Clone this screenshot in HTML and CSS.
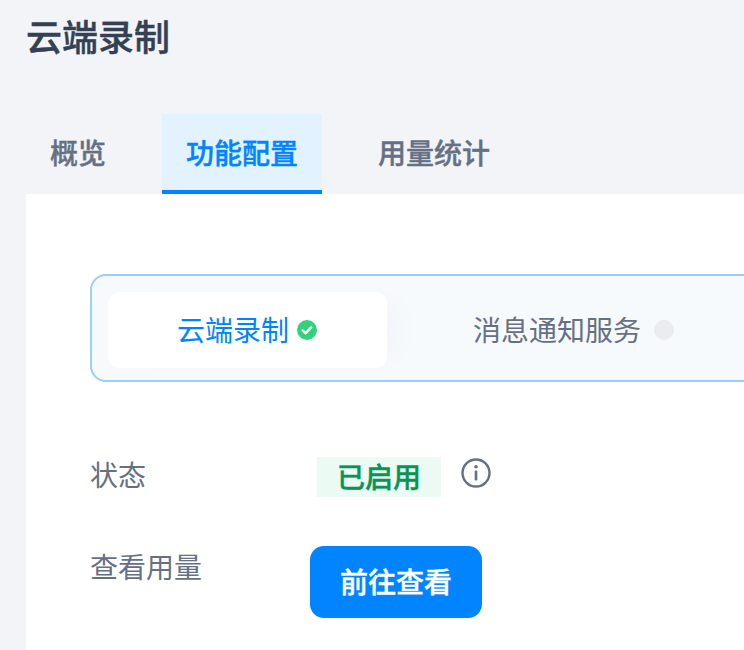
FILE: index.html
```html
<!DOCTYPE html>
<html lang="zh-CN">
<head>
<meta charset="utf-8">
<title>云端录制</title>
<link rel="stylesheet" href="styles.css">
</head>
<body>
<div class="page">
  <h1 class="title">云端录制</h1>
  <nav class="tabs">
    <a class="tab">概览</a>
    <a class="tab tab-active">功能配置</a>
    <a class="tab">用量统计</a>
  </nav>
  <main class="panel">
    <div class="segment">
      <div class="seg-item seg-active">
        <span class="seg-text">云端录制</span>
        <svg class="seg-icon" viewBox="0 0 20 20" aria-hidden="true"><circle cx="10" cy="10" r="10" fill="#32d17c"/><path d="M5.6 10.3l3 2.9 5.6-5.8" fill="none" stroke="#fff" stroke-width="2.4" stroke-linecap="round" stroke-linejoin="round"/></svg>
      </div>
      <div class="seg-item seg-next">
        <span class="seg-text">消息通知服务</span>
        <span class="seg-dot"></span>
      </div>
    </div>
    <div class="row row-status">
      <span class="label label-status">状态</span>
      <span class="badge">已启用</span>
      <svg class="info" viewBox="0 0 30 30" aria-hidden="true"><circle cx="15" cy="15" r="13.5" fill="none" stroke="#667085" stroke-width="2.4"/><circle cx="15" cy="8.8" r="1.8" fill="#667085"/><rect x="13.7" y="12.6" width="2.6" height="10" rx="1" fill="#667085"/></svg>
    </div>
    <div class="row row-usage">
      <span class="label">查看用量</span>
      <button class="btn">前往查看</button>
    </div>
  </main>
</div>
</body>
</html>
```

FILE: styles.css
```css
* { box-sizing: border-box; }
html, body { margin: 0; height: 100%; overflow: hidden; }
body {
  background: #f2f4f8;
  font-family: "Noto Sans CJK SC", "Noto Sans", sans-serif;
  font-size: 28px;
  color: #667085;
}
.page { width: 744px; height: 650px; overflow: hidden; padding-left: 26px; }
.title {
  margin: 0;
  height: 114px;
  padding-top: 10px;
  font-size: 36px;
  line-height: 50px;
  font-weight: 500;
  -webkit-text-stroke: 0.4px #344054;
  color: #344054;
}
.tabs { display: flex; gap: 32px; height: 80px; }
.tab {
  display: flex;
  align-items: center;
  padding: 0 24px;
  font-weight: 500;
  -webkit-text-stroke: 0.4px currentColor;
  color: #667085;
  border-bottom: 4px solid transparent;
}
.tab-active {
  background: #e3f2ff;
  color: #0084ff;
  border-bottom-color: #0084ff;
}
.panel {
  background: #fff;
  width: 1000px;
  height: 456px;
  padding: 80px 64px 0;
}
.segment {
  display: flex;
  height: 108px;
  padding: 16px;
  gap: 17px;
  border: 2px solid #99ceff;
  border-radius: 16px;
  background: #f6fafd;
}
.seg-item {
  display: flex;
  align-items: center;
  height: 76px;
  border-radius: 12px;
}
.seg-text { position: relative; top: -1px; line-height: 40px; }
.seg-active {
  width: 279px;
  padding-left: 69px;
  gap: 8px;
  background: #fff;
  color: #0084ff;
  box-shadow: 20px 0 30px -10px rgba(16, 40, 90, 0.025);
}
.seg-next { width: 342px; padding-left: 69px; gap: 13px; }
.seg-icon { width: 20px; height: 20px; flex: none; }
.seg-dot {
  width: 20px;
  height: 20px;
  flex: none;
  border-radius: 50%;
  background: #eaecf0;
}
.row { display: flex; align-items: flex-start; }
.label { width: 220px; line-height: 40px; }
.label-status { margin-top: -3px; height: 40px; }
.row-status { margin-top: 75px; }
.row-usage { margin-top: 49px; }
.badge {
  margin-left: 7px;
  padding: 0 20px;
  height: 40px;
  line-height: 38px;
  background: #ebfbf3;
  color: #079455;
  font-weight: 500;
  -webkit-text-stroke: 0.4px currentColor;
}
.info { width: 30px; height: 30px; margin: 1px 0 0 20px; flex: none; }
.btn {
  width: 172px;
  height: 72px;
  padding: 0 0 2px;
  border: 0;
  border-radius: 14px;
  background: #0084ff;
  color: #fff;
  font: 500 28px "Noto Sans CJK SC", "Noto Sans", sans-serif;
  -webkit-text-stroke: 0.4px currentColor;
}
```
